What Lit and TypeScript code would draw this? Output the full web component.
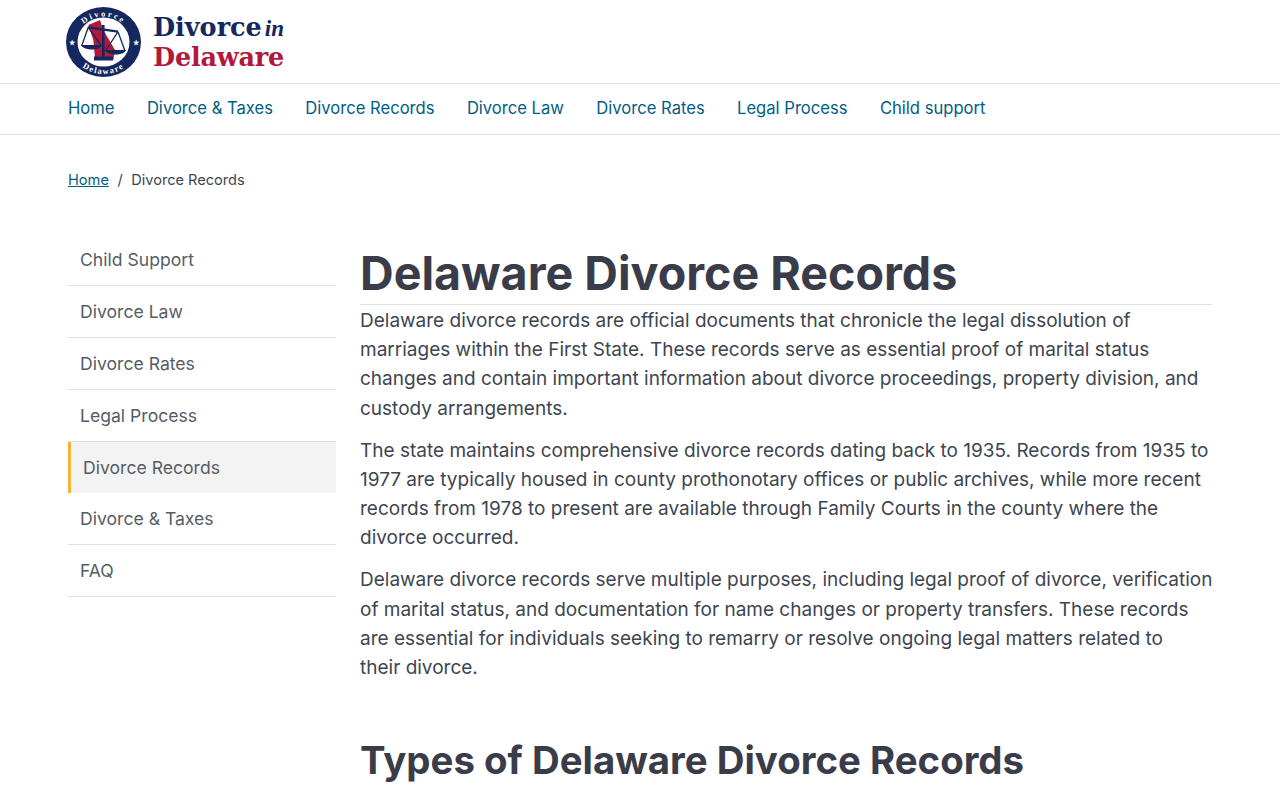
import { LitElement, html, css, svg } from "lit";
import { customElement } from "lit/decorators.js";

const NAV = ["Home", "Divorce & Taxes", "Divorce Records", "Divorce Law", "Divorce Rates", "Legal Process", "Child support"];
const SIDE = ["Child Support", "Divorce Law", "Divorce Rates", "Legal Process", "Divorce Records", "Divorce & Taxes", "FAQ"];

const PARAS = [
  ["Delaware divorce records are official documents that chronicle the legal dissolution of", "marriages within the First State. These records serve as essential proof of marital status", "changes and contain important information about divorce proceedings, property division, and", "custody arrangements."],
  ["The state maintains comprehensive divorce records dating back to 1935. Records from 1935 to", "1977 are typically housed in county prothonotary offices or public archives, while more recent", "records from 1978 to present are available through Family Courts in the county where the", "divorce occurred."],
  ["Delaware divorce records serve multiple purposes, including legal proof of divorce, verification", "of marital status, and documentation for name changes or property transfers. These records", "are essential for individuals seeking to remarry or resolve ongoing legal matters related to", "their divorce."],
];

@customElement("app-root")
export class AppRoot extends LitElement {
  static styles = css`
    :host { display: block; font-family: Inter, "Liberation Sans", sans-serif; color: #3d4551; background: #fff; }
    a { text-decoration: none; color: inherit; }
    .top { height: 83px; border-bottom: 1px solid #dfe1e2; display: flex; align-items: center; padding-left: 66px; gap: 12px; }
    .seal { width: 75px; height: 70px; display: block; margin-top: 1px; flex: none; }
    .seal text { font-family: "Liberation Serif", serif; font-weight: 700; }
    .word { font-family: "DejaVu Serif", serif; font-weight: 700; font-size: 25.5px; line-height: 29px; padding-top: 2px; }
    .l1 { color: #14285f; display: flex; align-items: baseline; gap: 3px; white-space: nowrap; }
    .l1 i { font-family: "Liberation Serif", serif; font-size: 23px; }
    .l2 { color: #b2183a; white-space: nowrap; letter-spacing: -0.2px; }
    .nav { border-bottom: 1px solid #dfe1e2; display: flex; align-items: center; padding: 0 0 2px 68px; box-sizing: border-box; height: 51px; gap: 32.4px; font-size: 16.6px; color: #005e84; }
    .crumbs { display: flex; align-items: center; padding: 36px 0 0 68px; height: 18px; font-size: 14.6px; gap: 8.5px; color: #3d4551; }
    .crumbs a { color: #005e84; text-decoration: underline; }
    .body { display: flex; padding: 53px 68px 0; gap: 24px; }
    .side { width: 268px; flex: none; margin-top: -8px; }
    .side a { display: flex; align-items: center; height: 51px; border-bottom: 1px solid #dfe1e2; padding-left: 12px; font-size: 17.6px; color: #565c65; }
    .side a.on { background: #f3f3f3; border-left: 3px solid #f5b32e; border-bottom: none; height: 51px; }
    .main { flex: 1; min-width: 0; }
    h1 { margin: 0; font-size: 46.6px; line-height: 62px; font-weight: 700; border-bottom: 1px solid #dfe1e2; height: 62px; color: #3a3c4a; }
    .copy { padding-top: 0.9px; }
    p { margin: 0 0 12.9px; font-size: 19px; line-height: 29.2px; color: #3d4551; white-space: nowrap; }
    h2 { margin: 53.4px 0 0; font-size: 38.4px; line-height: 48px; font-weight: 700; color: #3a3c4a; }
  `;

  private seal() {
    return html`<svg class="seal" viewBox="0 0 75 70" aria-hidden="true">
      ${svg`
      <defs>
        <path id="arcTop" d="M10 35 A27.5 25.5 0 0 1 65 35"></path>
        <path id="arcBot" d="M3.5 35 A34 32 0 0 0 71.5 35"></path>
      </defs>
      <ellipse cx="37.5" cy="35" rx="37.5" ry="35" fill="#14285f"></ellipse>
      <ellipse cx="37.5" cy="35" rx="26" ry="24.5" fill="#fff"></ellipse>
      <path d="M22.3 18 L34 13 L37.3 23 L49 43 L47.3 53 L29 51.3 L27.3 33 Z" fill="#b2183a"></path>
      <g fill="none" stroke="#14285f">
        <path d="M37.3 18 V50" stroke-width="2.6"></path>
        <path d="M22.3 20.3 L52 24.7" stroke-width="2.2"></path>
        <path d="M22.3 20.3 L15.6 39 M22.3 20.3 L35.6 39 M52 24.7 L39.5 44 M52 24.7 L59 44" stroke-width="1.3"></path>
      </g>
      <path d="M15 38 H36 C34 44 18 44 15 38 Z M39 43 H60 C58 49 42 49 39 43 Z M28 49.5 H47 V53.5 H28 Z" fill="#14285f"></path>
      <text fill="#fff" font-size="8.4" letter-spacing="2.2"><textPath href="#arcTop" startOffset="50%" text-anchor="middle">Divorce</textPath></text>
      <text fill="#fff" font-size="8.4" letter-spacing="1.4"><textPath href="#arcBot" startOffset="50%" text-anchor="middle">Delaware</textPath></text>
      <text x="3.2" y="38" fill="#fff" font-size="6.5">★</text>
      <text x="66.5" y="38" fill="#fff" font-size="6.5">★</text>
      `}
    </svg>`;
  }

  render() {
    return html`
      <header class="top">
        ${this.seal()}
        <div class="word">
          <div class="l1"><span>Divorce</span><i>in</i></div>
          <div class="l2">Delaware</div>
        </div>
      </header>
      <nav class="nav">${NAV.map((n) => html`<a href="#">${n}</a>`)}</nav>
      <div class="crumbs"><a href="#">Home</a><span>/</span><span>Divorce Records</span></div>
      <div class="body">
        <aside class="side">
          ${SIDE.map((s) => html`<a href="#" class=${s === "Divorce Records" ? "on" : ""}>${s}</a>`)}
        </aside>
        <main class="main">
          <h1>Delaware Divorce Records</h1>
          <div class="copy">
            ${PARAS.map((lines) => html`<p>${lines.map((l, i) => html`${i ? html`<br />` : ""}${l}`)}</p>`)}
          </div>
          <h2>Types of Delaware Divorce Records</h2>
        </main>
      </div>
    `;
  }
}
